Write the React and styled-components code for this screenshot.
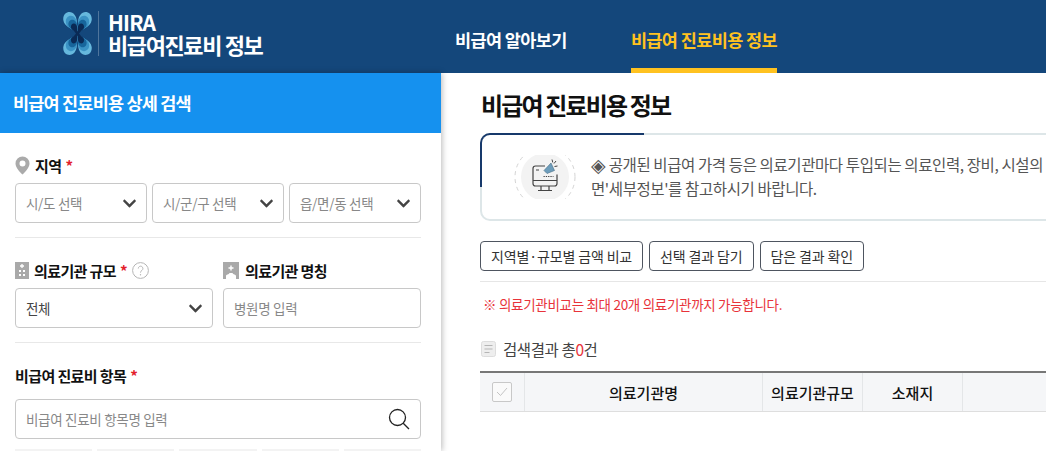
import React from 'react';
import styled, { createGlobalStyle } from 'styled-components';
import { FaChevronDown } from 'react-icons/fa';

const GlobalStyle = createGlobalStyle`
    html, body {
        margin: 0;
        padding: 0;
        height: 451px;
        overflow: hidden;
        background: #fff;
    }
    * {
        box-sizing: border-box;
    }
    body {
        font-family: "Noto Sans CJK KR", "Noto Sans", sans-serif;
        color: #111;
    }
`;

const Page = styled.div`
    width: 1046px;
    height: 451px;
    overflow: hidden;
    display: flex;
    flex-direction: column;
`;

const Header = styled.header`
    flex: none;
    height: 73px;
    background: #14477b;
    display: flex;
    color: #fff;
`;

const Brand = styled.div`
    width: 455px;
    padding: 11px 0 0 63px;
    display: flex;
    align-items: flex-start;
`;

const BrandText = styled.div`
    margin-left: 6px;
    padding-left: 9px;
    border-left: 1px solid rgba(255, 255, 255, 0.25);
    height: 45px;
    font-size: 22px;
    font-weight: 700;
    letter-spacing: -1.4px;
    line-height: 22px;
    white-space: nowrap;
`;

const BrandSmall = styled.div`
    font-size: 21px;
    letter-spacing: -0.8px;
`;

const Nav = styled.nav`
    display: flex;
    gap: 64px;
`;

const NavItem = styled.a`
    height: 73px;
    padding-top: 28px;
    font-size: 17.5px;
    line-height: 24px;
    font-weight: 700;
    letter-spacing: -0.6px;
    white-space: nowrap;
    color: ${(p) => (p.$active ? '#ffc220' : '#fff')};
    border-bottom: 5px solid ${(p) => (p.$active ? '#ffc220' : 'transparent')};
`;

const Body = styled.div`
    flex: 1;
    display: flex;
    min-height: 0;
`;

const Sidebar = styled.aside`
    flex: none;
    width: 441px;
    height: 100%;
    overflow: hidden;
    box-shadow: 1px 0 6px rgba(0, 0, 0, 0.28);
    position: relative;
    z-index: 1;
    background: #fff;
`;

const SidebarTitle = styled.h2`
    margin: 0;
    height: 60px;
    padding-left: 13px;
    background: #1591ef;
    color: #fff;
    font-size: 17.5px;
    font-weight: 700;
    letter-spacing: -0.8px;
    line-height: 60px;
`;

const Form = styled.div`
    padding: 23px 20px 0 15px;
`;

const Section = styled.div`
    padding-bottom: 14px;
    margin-bottom: 23px;
    border-bottom: ${(p) => (p.$plain ? 'none' : '1px solid #e8e8e8')};
`;

const Label = styled.div`
    display: flex;
    align-items: center;
    height: 18px;
    margin-bottom: ${(p) => p.$gap || 9}px;
    font-size: 15px;
    font-weight: 700;
    letter-spacing: -0.6px;
    white-space: nowrap;

    svg {
        flex: none;
        margin-right: ${(p) => p.$iconGap || 6}px;
    }
`;

const Required = styled.span`
    color: #e3202b;
    margin-left: 4px;
`;

const Row = styled.div`
    display: grid;
    grid-template-columns: ${(p) => p.$cols};
    gap: ${(p) => p.$gap}px;
`;

const Field = styled.div`
    height: 40px;
    padding: 0 9px 0 10px;
    border: 1px solid #c8c8c8;
    border-radius: 4px;
    display: flex;
    align-items: center;
    justify-content: space-between;
    font-size: 13.5px;
    letter-spacing: -0.3px;
    white-space: nowrap;
    color: ${(p) => (p.$value ? '#444' : '#888')};
    background: #fff;
`;

const Chevron = styled(FaChevronDown)`
    font-size: 15px;
    color: #444;
`;

const Tags = styled.div`
    display: grid;
    grid-template-columns: 77px 77px 78px 77px 77px;
    gap: 5px;
    margin-top: 10px;
`;

const Tag = styled.div`
    height: 20px;
    background: #f3f3f3;
`;

const Main = styled.main`
    flex: 1;
    min-width: 0;
    padding-left: 39px;
    overflow: hidden;
`;

const Title = styled.h1`
    margin: 14px 0 10px;
    height: 36px;
    font-size: 24px;
    line-height: 36px;
    font-weight: 700;
    letter-spacing: -1.85px;
    padding-left: 1px;
`;

const Notice = styled.div`
    position: relative;
    width: 640px;
    height: 88px;
    padding: 20px 0 0 32px;
    border: 2px solid #dde6e8;
    border-radius: 10px;
    display: flex;
    align-items: flex-start;

    &::before {
        content: '';
        position: absolute;
        left: -2px;
        top: -2px;
        width: 162px;
        height: 52px;
        border-top: 2px solid #17396b;
        border-left: 2px solid #17396b;
        border-top-left-radius: 10px;
    }
`;

const NoticeIcon = styled.div`
    flex: none;
    width: 62px;
    height: 44px;
    overflow: hidden;
    margin-right: 15px;
`;

const NoticeText = styled.p`
    margin: -3px 0 0;
    width: 470px;
    font-size: 15.5px;
    line-height: 24px;
    letter-spacing: -0.4px;
    color: #555;
    white-space: nowrap;
`;

const NoticeMark = styled.span`
    font-size: 19px;
    line-height: 20px;
    vertical-align: -1px;
`;

const Actions = styled.div`
    display: flex;
    gap: 6px;
    margin-top: 20px;
    padding-bottom: 10px;
    border-bottom: 1px solid #e6e6e6;
`;

const ActionButton = styled.button`
    height: 30px;
    padding: 0 10px;
    background: #fff;
    border: 1px solid #4e5560;
    border-radius: 4px;
    font-family: inherit;
    font-size: 14px;
    letter-spacing: -0.14px;
    color: #333;
    white-space: nowrap;
`;

const Warning = styled.p`
    margin: 12px 0 0 3px;
    font-size: 13.5px;
    line-height: 20px;
    letter-spacing: -0.3px;
    color: #e8333a;
`;

const ResultLine = styled.div`
    display: flex;
    align-items: center;
    gap: 7px;
    margin: 25px 0 12px 1px;
    height: 20px;
    font-size: 15.5px;
    letter-spacing: -0.4px;
    color: #444;
`;

const Count = styled.span`
    color: #e8333a;
`;

const Table = styled.div`
    width: 700px;
    height: 41px;
    display: grid;
    grid-template-columns: 45px 238px 100px 100px 1fr;
    background: #f5f6f8;
    border-top: 2px solid #777;
    border-bottom: 1px solid #dedede;
`;

const Cell = styled.div`
    display: flex;
    align-items: center;
    justify-content: center;
    border-right: 1px solid #e4e6e8;
    font-size: 15px;
    font-weight: 500;
    letter-spacing: 0;
    color: #111;
    white-space: nowrap;
`;

const Check = styled.span`
    width: 20px;
    height: 20px;
    border: 1px solid #c8c8c8;
    border-radius: 2px;
    background: #fafafa;
    display: flex;
    align-items: center;
    justify-content: center;
`;

// one lobe of the mark, drawn top-left and mirrored, shrunk toward the centre for each layer
const LOBE = 'M14.5 21.5C11 17 1 15 0.3 8C-0.2 3 3 0 6.5 0C10.5 0 13.5 4 13.8 9C14 13 14.5 17 14.5 21.5Z';
const MIRRORS = ['', 'translate(29 0) scale(-1 1)', 'translate(0 43) scale(1 -1)', 'translate(29 43) scale(-1 -1)'];
const LAYERS = [
    [1, '#66b8dd'],
    [0.82, '#3a92c4'],
    [0.64, '#17659b'],
    [0.46, '#0a2a55'],
];

function Logo() {
    return (
        <svg width="29" height="43" viewBox="0 0 29 43" style={{ marginTop: 1 }}>
            {MIRRORS.map((m) => (
                <g key={m} transform={m}>
                    {LAYERS.map(([s, fill]) => (
                        <path
                            key={fill}
                            d={LOBE}
                            fill={fill}
                            transform={`translate(14.5 21.5) scale(${s}) translate(-14.5 -21.5)`}
                        />
                    ))}
                </g>
            ))}
            <path d="M11 17 L18 26 M18 17 L11 26" stroke="#0a2a55" strokeWidth="2.4" />
        </svg>
    );
}

function PinIcon() {
    return (
        <svg width="15" height="19" viewBox="0 0 15 19">
            <path fillRule="evenodd" fill="#aaa" d="M7.5 0.5a7 7 0 0 1 7 7c0 3.6-4.2 8.6-7 11-2.8-2.4-7-7.4-7-11a7 7 0 0 1 7-7zM7.5 4.5a3 3 0 1 0 0 6a3 3 0 0 0 0-6z" />
        </svg>
    );
}

function BuildingIcon() {
    return (
        <svg width="14" height="17" viewBox="0 0 14 17">
            <rect width="14" height="17" fill="#a9a9a9" />
            <path d="M7 2v4M5 4h4" stroke="#fff" strokeWidth="1.3" />
            <path d="M4 8h2v2H4zM8 8h2v2H8zM4 12h2v2H4zM8 12h2v2H8z" fill="#fff" />
        </svg>
    );
}

function HospitalIcon() {
    return (
        <svg width="16" height="17" viewBox="0 0 16 17">
            <rect width="16" height="17" fill="#a9a9a9" />
            <path d="M8 3.5v5M5.5 6h5" stroke="#fff" strokeWidth="1.4" />
            <path d="M3 17v-3c0-1.5 3-1.5 3.5-3h3c.5 1.5 3.5 1.5 3.5 3v3z" fill="#fff" />
        </svg>
    );
}

function HelpIcon() {
    return (
        <svg width="17" height="17" viewBox="0 0 17 17" style={{ marginLeft: 5, marginRight: 0 }}>
            <circle cx="8.5" cy="8.5" r="7.9" fill="none" stroke="#b5b5b5" />
            <path d="M6.3 6.5a2.3 2.3 0 1 1 3.6 1.9c-.8.6-1.4 1.1-1.4 2.2" fill="none" stroke="#b5b5b5" />
            <circle cx="8.5" cy="12.7" r=".7" fill="#b5b5b5" />
        </svg>
    );
}

function SearchIcon() {
    return (
        <svg width="22" height="22" viewBox="0 0 22 22" style={{ marginRight: 1 }}>
            <circle cx="9.5" cy="9.5" r="8" fill="none" stroke="#222" strokeWidth="1.3" />
            <path d="M15.2 15.2L21 21" stroke="#222" strokeWidth="1.3" />
        </svg>
    );
}

function MonitorIcon() {
    return (
        <svg width="62" height="62" viewBox="0 0 62 62" style={{ marginTop: -9 }}>
            <circle cx="31" cy="31" r="30" fill="none" stroke="#d4d4d4" strokeDasharray="4 4" />
            <circle cx="31" cy="31" r="24" fill="#f3f3f3" />
            <path d="M31 20h-9.500a2.500 2.500 0 0 0-2.500 2.500v15a2.500 2.500 0 0 0 2.500 2.500h19a2.500 2.500 0 0 0 2.500-2.500v-9" fill="none" stroke="#444" strokeWidth="1.2" />
            <path d="M19 34.500h24M27 40v4M35 40v4M24 44.500h14M22 24h3" stroke="#444" strokeWidth="1.2" fill="none" />
            <path d="M29.500 30.500h10" stroke="#444" strokeDasharray="1.3 1" />
            <path d="M30 24.500l7-7.500 3.500 7.500-7.500 3z" fill="#6d9dbb" stroke="#4a6f86" strokeWidth=".6" />
            <path d="M38 13.500l.8 3M42 15l-2 2.500M43.500 20l-3 .5" stroke="#444" />
        </svg>
    );
}

function DocIcon() {
    return (
        <svg width="15" height="16" viewBox="0 0 15 16">
            <rect x="0.5" y="0.5" width="14" height="15" rx="2" fill="#eee" stroke="#ddd" />
            <path d="M3.5 4.5h8M3.5 8h8M3.5 11.5h5" stroke="#b5b5b5" strokeWidth="1.2" />
        </svg>
    );
}

function Select({ children, value }) {
    return (
        <Field $value={value}>
            {children}
            <Chevron />
        </Field>
    );
}

export default function App() {
    return (
        <Page>
            <GlobalStyle />
            <Header>
                <Brand>
                    <Logo />
                    <BrandText>
                        <BrandSmall>HIRA</BrandSmall>
                        비급여진료비 정보
                    </BrandText>
                </Brand>
                <Nav>
                    <NavItem>비급여 알아보기</NavItem>
                    <NavItem $active>비급여 진료비용 정보</NavItem>
                </Nav>
            </Header>
            <Body>
                <Sidebar>
                    <SidebarTitle>비급여 진료비용 상세 검색</SidebarTitle>
                    <Form>
                        <Section>
                            <Label $iconGap={5}>
                                <PinIcon />
                                지역<Required>*</Required>
                            </Label>
                            <Row $cols="132px 132px 132px" $gap={5}>
                                <Select>시/도 선택</Select>
                                <Select>시/군/구 선택</Select>
                                <Select>읍/면/동 선택</Select>
                            </Row>
                        </Section>
                        <Section>
                            <Row $cols="198px 198px" $gap={10}>
                                <div>
                                    <Label $iconGap={5}>
                                        <BuildingIcon />
                                        의료기관 규모<Required>*</Required>
                                        <HelpIcon />
                                    </Label>
                                    <Select value>전체</Select>
                                </div>
                                <div>
                                    <Label $iconGap={6}>
                                        <HospitalIcon />
                                        의료기관 명칭
                                    </Label>
                                    <Field>병원명 입력</Field>
                                </div>
                            </Row>
                        </Section>
                        <Section $plain>
                            <Label $gap={15}>
                                비급여 진료비 항목<Required>*</Required>
                            </Label>
                            <Field>
                                비급여 진료비 항목명 입력
                                <SearchIcon />
                            </Field>
                            <Tags>
                                {[1, 2, 3, 4, 5].map((n) => (
                                    <Tag key={n} />
                                ))}
                            </Tags>
                        </Section>
                    </Form>
                </Sidebar>
                <Main>
                    <Title>비급여 진료비용 정보</Title>
                    <Notice>
                        <NoticeIcon>
                            <MonitorIcon />
                        </NoticeIcon>
                        <NoticeText>
                            <NoticeMark>◈</NoticeMark> 공개된 비급여 가격 등은 의료기관마다 투입되는 의료인력, 장비, 시설의
                            <br />
                            면'세부정보'를 참고하시기 바랍니다.
                        </NoticeText>
                    </Notice>
                    <Actions>
                        <ActionButton>지역별·규모별 금액 비교</ActionButton>
                        <ActionButton>선택 결과 담기</ActionButton>
                        <ActionButton>담은 결과 확인</ActionButton>
                    </Actions>
                    <Warning>※ 의료기관비교는 최대 20개 의료기관까지 가능합니다.</Warning>
                    <ResultLine>
                        <DocIcon />
                        <span>
                            검색결과 총<Count>0</Count>건
                        </span>
                    </ResultLine>
                    <Table>
                        <Cell>
                            <Check>
                                <svg width="12" height="10" viewBox="0 0 12 10">
                                    <path d="M1 5l3.5 3.5L11 1" fill="none" stroke="#c4c4c4" />
                                </svg>
                            </Check>
                        </Cell>
                        <Cell>의료기관명</Cell>
                        <Cell>의료기관규모</Cell>
                        <Cell>소재지</Cell>
                        <Cell />
                    </Table>
                </Main>
            </Body>
        </Page>
    );
}
